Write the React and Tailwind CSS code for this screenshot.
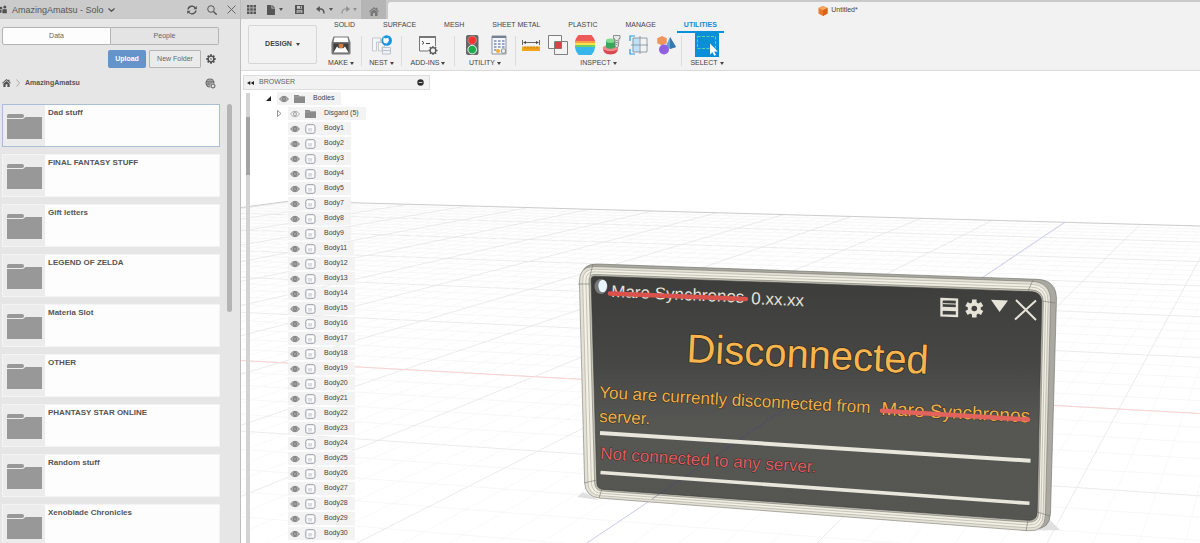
import React from "react";

const folders = [
  "Dad stuff",
  "FINAL FANTASY STUFF",
  "Gift letters",
  "LEGEND OF ZELDA",
  "Materia Slot",
  "OTHER",
  "PHANTASY STAR ONLINE",
  "Random stuff",
  "Xenoblade Chronicles",
];

const bodies = [
  1, 2, 3, 4, 5, 7, 8, 9, 11, 12, 13, 14, 15, 16, 17, 18, 19, 20, 21, 22, 23, 24, 25, 26, 27, 28, 29, 30,
];

const tabs = ["SOLID", "SURFACE", "MESH", "SHEET METAL", "PLASTIC", "MANAGE", "UTILITIES"];

function Caret({ className = "" }) {
  return (
    <svg viewBox="0 0 4 3" className={"h-[3px] w-1 shrink-0 fill-current " + className} aria-hidden="true">
      <path d="M0 0h4L2 3z" />
    </svg>
  );
}

function HomeIcon({ className }) {
  return (
    <svg viewBox="0 0 10 9" className={className} fill="currentColor" aria-hidden="true">
      <path d="M5 0 0 4.400l.7.8L5 1.500l4.300 3.700.7-.8-1.600-1.400V.8H7v1z" />
      <path d="M5 2.300 1.500 5.300V9H4V6h2v3h2.500V5.300z" />
    </svg>
  );
}

function GearIcon({ className, hole = 2.6 }) {
  return (
    <svg viewBox="0 0 12 12" className={className} aria-hidden="true">
      <g stroke="currentColor" strokeWidth="2.200">
        <path d="M6 .4v11.200M.4 6h11.200M2 2l8 8M10 2l-8 8" />
      </g>
      <circle cx="6" cy="6" r="4.200" fill="currentColor" />
      <circle cx="6" cy="6" r={hole} fill="#e6e6e6" />
      <circle cx="6" cy="6" r="1" fill="currentColor" />
    </svg>
  );
}

function FolderCard({ name, selected }) {
  return (
    <li>
      <a
        href="#folder"
        className={
          "flex h-[43px] border bg-[#fdfdfd] " + (selected ? "border-[#a9bdd6]" : "border-[#f4f4f4]")
        }
      >
        <span className="flex w-[42px] shrink-0 items-center justify-center bg-[#ececec]">
          <svg viewBox="0 0 35 26" className="h-[26px] w-[35px] fill-[#989898]" aria-hidden="true">
            <path d="M0 2.500Q0 1 1.500 1H15q2 0 2 2t-2 2H0z" />
            <path d="M0 6h16l2.500-2H35v22H0z" />
          </svg>
        </span>
        <span className="px-[3px] pt-[3px] text-[8px] leading-[10px] font-bold text-[#555]">{name}</span>
      </a>
    </li>
  );
}

function DataPanel() {
  return (
    <aside className="flex w-[241px] shrink-0 flex-col overflow-hidden border-r border-[#bdbdbd] bg-[#e6e6e6] text-[#555]">
      <header className="flex h-[19px] shrink-0 items-center bg-[#cbcbcb] pr-1">
        <svg viewBox="0 0 8 9" className="h-[9px] w-2 fill-[#505050]" aria-hidden="true">
          <circle cx="1" cy="3" r="1.300" />
          <circle cx="4.800" cy="2" r="1.500" />
          <path d="M0 4.800h1.500v3H0zM2.400 4.300h4.400v3.900H2.400z" />
        </svg>
        <button className="ml-1 flex items-center gap-1 text-[9px] leading-[12px]">
          AmazingAmatsu - Solo
          <svg viewBox="0 0 7 4" className="h-1 w-[7px]" fill="none" stroke="#555" strokeWidth="1.300" aria-hidden="true">
            <path d="M.5.500l3 2.800 3-2.800" />
          </svg>
        </button>
        <div className="ml-auto flex items-center gap-[10px]">
          <button aria-label="Refresh">
            <svg viewBox="0 0 10 10" className="block size-[10px]" fill="none" stroke="#505050" strokeWidth="1.300" aria-hidden="true">
              <path d="M1 4.500A4 4 0 0 1 8.300 3M9 5.500A4 4 0 0 1 1.700 7" />
              <path d="M9.800 1v3.200H6.500zM.2 9V5.800h3.300z" fill="#505050" stroke="none" />
            </svg>
          </button>
          <button aria-label="Search">
            <svg viewBox="0 0 10 10" className="block size-[10px]" fill="none" stroke="#555" aria-hidden="true">
              <circle cx="4" cy="4" r="3.300" />
              <path d="M6.400 6.400l3.300 3.300" strokeWidth="1.400" />
            </svg>
          </button>
          <button aria-label="Close panel">
            <svg viewBox="0 0 9 9" className="block size-[9px]" fill="none" stroke="#5a5a5a" strokeWidth=".9" aria-hidden="true">
              <path d="M.5.500l8 8M8.500.500l-8 8" />
            </svg>
          </button>
        </div>
      </header>

      <div className="mt-2 mr-[21px] ml-[2px] flex h-[18px] shrink-0 text-[7px] text-[#666]">
        <button className="flex-1 rounded-l-[2px] border border-[#b5b5b5] bg-[#fdfdfd]">Data</button>
        <button className="flex-1 rounded-r-[2px] border border-l-0 border-[#b5b5b5] bg-[#e4e4e4]">People</button>
      </div>

      <div className="mt-[5px] mr-6 flex h-[18px] shrink-0 items-center justify-end gap-[3px] text-[7px]">
        <button className="h-[18px] w-[38px] rounded-[2px] bg-[#6594cb] font-bold text-white">Upload</button>
        <button className="h-[18px] w-[52px] rounded-[1px] border border-[#b5b5b5] bg-[#ebebeb] text-[#666]">
          New Folder
        </button>
        <button aria-label="Settings" className="ml-[2px]">
          <GearIcon className="block size-[10px] text-[#505050]" />
        </button>
      </div>

      <nav aria-label="Breadcrumb" className="mt-[7px] mr-6 flex h-4 shrink-0 items-center pl-[2px] text-[7px] font-bold">
        <a href="#home" aria-label="Home">
          <HomeIcon className="h-2 w-[9px] text-[#505050]" />
        </a>
        <svg viewBox="0 0 4 8" className="mx-[5px] h-2 w-1" fill="none" stroke="#aaa" aria-hidden="true">
          <path d="M.5.500L3.500 4l-3 3.500" />
        </svg>
        <a href="#project">AmazingAmatsu</a>
        <button aria-label="Share" className="ml-auto">
          <svg viewBox="0 0 11 11" className="block size-[11px]" aria-hidden="true">
            <circle cx="5" cy="5" r="4.500" fill="#5a5a5a" />
            <path d="M.5 5h9M5 .5v9M1.500 2.700h7M1.500 7.300h7M5 .5C2 3 2 7 5 9.500M5 .5C8 3 8 7 5 9.500" fill="none" stroke="#ddd" strokeWidth=".5" />
            <circle cx="8" cy="8" r="2.800" fill="#e6e6e6" />
            <circle cx="8" cy="8" r="2" fill="none" stroke="#555" />
          </svg>
        </button>
      </nav>

      <div className="mt-[13px] flex min-h-0 flex-1 pr-2 pl-[2px]">
        <ul className="flex h-0 flex-1 flex-col gap-[7px]">
          {folders.map((name, i) => (
            <FolderCard key={name} name={name} selected={i === 0} />
          ))}
        </ul>
        <div className="ml-[7px] h-[208px] w-[5px] rounded-full bg-[#b4b4b4]" />
      </div>
    </aside>
  );
}

function TitleBar() {
  return (
    <header className="flex h-[19px] bg-[#c9c9c9] text-[#555]">
      <div className="flex items-center pl-[6px]">
        <button aria-label="Apps">
          <svg viewBox="0 0 9 9" className="block size-[9px] fill-current" aria-hidden="true">
            <path d="M0 0h2.500v2.500H0zM3.250 0h2.500v2.500h-2.500zM6.500 0H9v2.500H6.500zM0 3.250h2.500v2.500H0zM3.250 3.250h2.500v2.500h-2.500zM6.500 3.250H9v2.500H6.500zM0 6.500h2.500V9H0zM3.250 6.500h2.500V9h-2.500zM6.500 6.500H9V9H6.500z" />
          </svg>
        </button>
        <button aria-label="File" className="ml-[11px] flex items-center gap-1">
          <svg viewBox="0 0 8 10" className="h-[10px] w-2 fill-current" aria-hidden="true">
            <path d="M0 0h4.500v3.500H8V10H0zM5.300 0 8 2.700H5.300z" />
          </svg>
          <Caret />
        </button>
        <button aria-label="Save" className="ml-3">
          <svg viewBox="0 0 9 9" className="block size-[9px] fill-current" aria-hidden="true">
            <path fillRule="evenodd" d="M0 0h9v9H0zM2 1v2.700h5V1zM1.700 5.200V8h5.600V5.200z" />
            <path d="M2.500 6h4v.6h-4zM2.500 7h4v.6h-4zM5 1.300h1.200v2H5z" />
          </svg>
        </button>
        <button aria-label="Undo" className="ml-3 flex items-center gap-1">
          <svg viewBox="0 0 9 8" className="h-2 w-[9px]" fill="none" stroke="currentColor" strokeWidth="1.400" aria-hidden="true">
            <path d="M1.500 3H5q3 .3 3 4.500" />
            <path d="M3.800 0v6L0 3z" fill="currentColor" stroke="none" />
          </svg>
          <Caret />
        </button>
        <button aria-label="Redo" className="ml-2 flex items-center gap-[3px] text-[#8f8f8f]">
          <svg viewBox="0 0 9 8" className="h-2 w-[9px]" fill="none" stroke="currentColor" strokeWidth="1.200" aria-hidden="true">
            <path d="M7.500 3H4Q1 3.300 1 7.500" />
            <path d="M5.200 0v6L9 3z" fill="currentColor" stroke="none" />
          </svg>
          <Caret />
        </button>
        <button aria-label="Home" className="ml-1 flex h-[19px] w-[25px] items-center justify-center bg-[#b5b5b5] pt-1 text-[#777]">
          <HomeIcon className="h-[9px] w-[10px]" />
        </button>
      </div>
      <div className="mt-[2px] ml-[2px] flex flex-1 items-center justify-center gap-[3px] rounded-tl-[3px] bg-[#f2f2f2] pl-[88px] text-[7px] text-[#444]">
        <svg viewBox="0 0 10 10" className="size-[10px]" aria-hidden="true">
          <path d="M5 0l4.500 2v5.500L5 10 .5 7.500V2z" fill="#e8792b" />
          <path d="M5 0l4.500 2L5 4.200.5 2z" fill="#f6a765" />
          <path d="M5 4.200V10l4.500-2.500V2z" fill="#d96217" />
        </svg>
        <span>Untitled*</span>
      </div>
    </header>
  );
}

function Group({ label, width, children }) {
  return (
    <div className={"flex flex-col items-center " + width}>
      <div className="flex h-6 items-center gap-[7px]">{children}</div>
      <button className="flex h-3 items-center gap-[2px] whitespace-nowrap">
        {label}
        <Caret />
      </button>
    </div>
  );
}

function Divider() {
  return <div className="my-[3px] w-px bg-[#dcdcdc]" />;
}

function Tool({ label, children, className = "w-5" }) {
  return (
    <button aria-label={label} className={className}>
      <svg viewBox="0 0 20 20" className="mx-auto block size-5" fill="none" aria-hidden="true">
        {children}
      </svg>
    </button>
  );
}

function Ribbon() {
  return (
    <div className="flex h-[52px] shrink-0 border-b border-[#dadada] bg-[#f2f2f2] text-[7px] text-[#444]">
      <button className="mt-[6px] ml-[7px] flex h-[39px] w-[69px] shrink-0 items-center justify-center gap-1 rounded-[2px] border border-[#d6d6d6] font-bold">
        DESIGN
        <Caret />
      </button>
      <div className="ml-1 flex flex-col">
        <div className="flex h-[14px] gap-[14px] pl-[6px]">
          {tabs.map((t) => (
            <button
              key={t}
              className={
                "border-b-2 px-[7px] whitespace-nowrap " +
                (t === "UTILITIES" ? "border-[#0a8fd8] font-bold text-[#0a8fd8]" : "border-transparent")
              }
            >
              {t}
            </button>
          ))}
        </div>
        <div className="flex h-9">
          <Group label="MAKE" width="w-[40px]">
            <Tool label="Make">
              <path d="M2.500 1.500h15l2 6v10.500q0 1.500-1.500 1.500h-16Q.5 19.500.5 18V7.500z" fill="#777" />
              <path d="M3.500 2.500h13l1 4.500h-15z" fill="#fff" />
              <path d="M2.500 8.500h15V17.500h-15z" fill="#3f3f3f" />
              <path d="M2.500 17.500l3.500-6 2 2 2-3 2 3 2-2 3.500 6z" fill="#fff" />
              <path d="M7.700 9h4.600v2.500L10 14l-2.300-2.500z" fill="#d77c3c" />
            </Tool>
          </Group>
          <Divider />
          <Group label="NEST" width="w-[39px]">
            <Tool label="Nest">
              <path d="M.5 3h8v4H4.500v9h-4zM6.500 7.500h6V12H10v4H6.500z" fill="#f5f6f8" stroke="#c5c9ce" />
              <path d="M10.500 12.500h8v6.500h-8z" fill="#eef2f7" stroke="#b9c3cf" />
              <path d="M11 15.500h7.500" stroke="#b9c3cf" />
              <circle cx="14.700" cy="5.500" r="5.300" fill="#1795e0" />
              <path d="M11.500 2.500l2.200 1 2.500-1 .8 3-2 3-3-.5-.8-2z" fill="#fff" />
            </Tool>
          </Group>
          <Divider />
          <Group label="ADD-INS" width="w-[52px]">
            <Tool label="Scripts and add-ins">
              <path d="M1.500 2h16v14h-16z" fill="#f8f8f8" stroke="#777" />
              <path d="M1 2h17" stroke="#777" strokeWidth="2" />
              <path d="M4 6l2 1.800L4 9.500M8 8.500h4" stroke="#444" />
              <circle cx="15" cy="15.500" r="5" fill="#f2f2f2" />
              <path d="M15 11v9M10.500 15.500h9M11.800 12.300l6.400 6.400M18.200 12.300l-6.400 6.400" stroke="#555" strokeWidth="1.300" />
              <circle cx="15" cy="15.500" r="2.800" fill="#f2f2f2" stroke="#555" strokeWidth="1.200" />
            </Tool>
          </Group>
          <Divider />
          <Group label="UTILITY" width="w-[60px]">
            <Tool label="Compute">
              <rect x="4" y="0" width="12.500" height="20" rx="2" fill="#666" />
              <circle cx="10.200" cy="5.200" r="4.200" fill="#f4322e" stroke="#b9b9b9" strokeWidth=".6" />
              <circle cx="10.200" cy="14.600" r="4.300" fill="#1dab4c" stroke="#fff" strokeWidth=".9" />
            </Tool>
            <Tool label="Report">
              <path d="M3 1h14v18H3z" fill="#f4f6fa" stroke="#8b93a5" />
              <path d="M3 2h14" stroke="#777f92" strokeWidth="2" />
              <path d="M5 6h2.500M9 6h2.500M13 6h2.500M5 9h2.500M9 9h2.500M13 9h2.500M5 12h2.500M9 12h2.500M13 12h2.500M5 15h2.500" stroke="#7990b8" strokeWidth="1.300" />
              <circle cx="9" cy="16" r="2" fill="#eeb03c" />
              <circle cx="14.500" cy="16" r="2.300" fill="#eee" stroke="#777" strokeWidth=".8" />
            </Tool>
          </Group>
          <Divider />
          <Group label="INSPECT" width="w-[165px]">
            <Tool label="Measure">
              <path d="M1.500 5v5M18.500 5v5M3 7.500h14" stroke="#444" strokeWidth=".8" />
              <path d="M2 7.500l3-1.600v3.200zM18 7.500l-3-1.600v3.200z" fill="#444" />
              <path d="M1 11.500h18v4.500H1z" fill="#f2a51b" />
              <path d="M4 11.500v2M7 11.500v2M10 11.500v2M13 11.500v2M16 11.500v2" stroke="#9c6a0c" strokeWidth=".7" />
            </Tool>
            <Tool label="Interference">
              <path d="M.5.500h13v13H.5z" fill="#f8f8f8" stroke="#808080" />
              <path d="M6.500 6.500h13v13h-13z" fill="#f4f4f4" fillOpacity=".7" stroke="#808080" />
              <path d="M13.500 6v7.500H6" stroke="#808080" />
              <path d="M7 7h6.500v6.500H7z" fill="#d64545" />
            </Tool>
            <Tool label="Curvature">
              <path d="M3.500 0h13q3.500 4 3.500 7H0q0-3 3.500-7z" fill="#ee5957" />
              <path d="M0 6h20v2.500H0z" fill="#f7a04a" />
              <path d="M0 8h20v2H0z" fill="#f8e14a" />
              <path d="M0 10h20v2.500H0z" fill="#72cf63" />
              <path d="M0 12h20q0 4-3.500 8h-13Q0 16 0 12z" fill="#37b6ec" />
            </Tool>
            <Tool label="Section">
              <path d="M1 13q0 6.500 7.500 6.500T16 13z" fill="#d9484e" />
              <ellipse cx="8.500" cy="13" rx="7.800" ry="3.300" fill="#ef8b8d" />
              <path d="M4 6v6.500q4.500 2.500 9 0V6z" fill="#3aa65c" />
              <ellipse cx="8.500" cy="5.700" rx="4.500" ry="2.200" fill="#7fd98f" />
              <path d="M11.500.500h6.500v3h-1l-.7 8-1.600 1-1.500-1-.7-8h-1z" fill="#e9e9e9" stroke="#777" strokeWidth=".8" />
              <path d="M13 5l3 1M13 7l3 1M13.500 9l2 1" stroke="#777" strokeWidth=".8" />
            </Tool>
            <Tool label="Draft analysis">
              <path d="M3.500 3h7v14h-7z" fill="#bfe0f7" />
              <path d="M4 3h14v14H4zM11 1v18M2 10h17" stroke="#8795a3" strokeWidth=".9" />
              <path d="M6 1H1v5M1 14v5h5" stroke="#2a98de" strokeWidth="1.200" />
            </Tool>
            <Tool label="Components">
              <path d="M6 1l4.800 2.300v5L6 10.600 1.200 8.300v-5z" fill="#f0965c" />
              <path d="M14 2l6 10-6 2-4-3z" fill="#5aa2d8" />
              <path d="M14 2l6 10-6 2z" fill="#3978ad" />
              <circle cx="8" cy="14.500" r="5" fill="#8f61e0" />
            </Tool>
          </Group>
          <Divider />
          <Group label="SELECT" width="w-[50px]">
            <button aria-label="Select" className="h-6 w-6 bg-[#0a8fd8]">
              <svg viewBox="0 0 24 24" className="block size-6" fill="none" aria-hidden="true">
                <path d="M2.500 3.500h18v12h-18z" stroke="#5fd0a8" strokeDasharray="3 1.500" />
                <path d="M15 10.500v11l2.500-2.300 1.700 3.600 1.800-.9-1.700-3.500h3.500z" fill="#fff" />
              </svg>
            </button>
          </Group>
        </div>
      </div>
    </div>
  );
}

function Eye({ muted }) {
  return (
    <button aria-label="Toggle visibility" className="shrink-0">
      <svg viewBox="0 0 10 8" className="block h-2 w-[10px]" fill="none" stroke={muted ? "#aaa" : "#858585"} aria-hidden="true">
        <path d="M.5 4Q5-1.500 9.500 4 5 9.500.5 4z" fill={muted ? "#fff" : "#b5b5b5"} />
        <circle cx="5" cy="4" r="1.800" fill={muted ? "#ddd" : "#777"} />
        {muted ? null : <circle cx="5" cy="4" r=".7" fill="#ddd" stroke="none" />}
      </svg>
    </button>
  );
}

function TreeFolder() {
  return (
    <svg viewBox="0 0 11 8" className="mx-[5px] h-2 w-[11px] shrink-0 fill-[#8a8a8a]" aria-hidden="true">
      <path d="M0 0h4.500l1 1.200H11V8H0z" />
      <path d="M0 2h4.500l1-.7H11" stroke="#b5b5b5" strokeWidth=".5" fill="none" />
    </svg>
  );
}

function BrowserTree() {
  const row = "flex h-[13px] w-max items-center bg-[#f3f3f3] pr-[7px] pl-[2px]";
  return (
    <div className="relative flex h-full w-[190px] flex-col overflow-hidden pl-[2px] text-[7px] text-[#444]">
      <div className="mt-1 flex h-[15px] w-[187px] shrink-0 items-center border border-[#dedede] bg-[#f2f2f2] pr-[5px] pl-[3px] text-[#666]">
        <button aria-label="Collapse browser">
          <svg viewBox="0 0 7 4" className="block h-1 w-[7px] fill-[#222]" aria-hidden="true">
            <path d="M3.300 0v4L0 2zM7 0v4L3.700 2z" />
          </svg>
        </button>
        <h2 className="ml-[5px]">BROWSER</h2>
        <button aria-label="Hide browser" className="ml-auto">
          <svg viewBox="0 0 7 7" className="block size-[7px]" aria-hidden="true">
            <circle cx="3.500" cy="3.500" r="3.200" fill="#2d2d2d" />
            <path d="M1.700 3.500h3.600" stroke="#ddd" strokeWidth=".9" />
          </svg>
        </button>
      </div>
      <div className="mt-[2px] flex min-h-0 flex-1">
        <div className="mt-[1px] ml-[3px] w-1 shrink-0 bg-[#d3d3d3] pt-6">
          <div className="h-[58px] bg-[#a3a3a3]" />
        </div>
        <ul className="flex h-0 flex-col gap-[2px] pl-4">
          <li className="flex items-center">
            <button aria-label="Collapse Bodies">
              <svg viewBox="0 0 5 5" className="block size-[5px] fill-[#222]" aria-hidden="true">
                <path d="M5 0v5H0z" />
              </svg>
            </button>
            <div className={row + " ml-[6px]"}>
              <Eye />
              <TreeFolder />
              <span className="ml-[3px]">Bodies</span>
            </div>
          </li>
          <li className="flex items-center pl-[11px]">
            <button aria-label="Expand Disgard">
              <svg viewBox="0 0 5 7" className="block h-[7px] w-[5px]" fill="#fff" stroke="#777" strokeWidth=".8" aria-hidden="true">
                <path d="M.5.500v6l3.500-3z" />
              </svg>
            </button>
            <div className={row + " ml-[6px]"}>
              <Eye muted />
              <TreeFolder />
              <span className="ml-[3px]">Disgard (5)</span>
            </div>
          </li>
          {bodies.map((n) => (
            <li key={n} className="pl-[22px]">
              <div className={row}>
                <Eye />
                <svg viewBox="0 0 11 10" className="mx-[5px] h-[10px] w-[11px] shrink-0" aria-hidden="true">
                  <rect x=".8" y=".7" width="9.200" height="8.600" rx="1.800" fill="#fcfcfd" stroke="#8d929c" strokeWidth=".9" />
                  <path d="M3 4h4v3.500H3z" fill="#d9dbe0" />
                </svg>
                <span className="ml-[3px]">Body{n}</span>
              </div>
            </li>
          ))}
        </ul>
      </div>
    </div>
  );
}

/* Perspective grid: two families of lines meeting at their vanishing points. */
const VB = [1306, 61];
const VA = [-5546, 40];

const depthLines = Array.from({ length: 46 }, (_, k) => {
  const y = 60.7 + 1 / (0.00605 - (0.000536 * k) / 5);
  return { k, y };
}).filter((l) => l.y > 0 && l.y < 900);

const crossLines = Array.from({ length: 100 }, (_, i) => i - 60);

function roundedQuad(points, radii) {
  const toward = (a, b, r) => {
    const len = Math.hypot(b[0] - a[0], b[1] - a[1]);
    return [a[0] + ((b[0] - a[0]) * r) / len, a[1] + ((b[1] - a[1]) * r) / len];
  };
  return (
    points
      .map((p, i) => {
        const from = toward(p, points[(i + 3) % 4], radii[i]);
        const to = toward(p, points[(i + 1) % 4], radii[i]);
        return `${i ? "L" : "M"}${from} Q${p} ${to}`;
      })
      .join(" ") + "Z"
  );
}

const OUTER = [[579, 266], [1051, 282], [1045, 532], [585, 497]];
const INNER = [[591, 276], [1042, 292], [1037, 521], [597, 489]];

function frame(t) {
  const pts = OUTER.map((o, i) => [o[0] + (INNER[i][0] - o[0]) * t, o[1] + (INNER[i][1] - o[1]) * t]);
  const rOuter = [16, 20, 17, 15];
  const rInner = [4, 11, 9, 6];
  return roundedQuad(pts, rOuter.map((r, i) => r + (rInner[i] - r) * t));
}

function Viewport() {
  return (
    <svg
      viewBox="241 71 959 472"
      preserveAspectRatio="xMinYMin slice"
      className="absolute inset-0 h-full w-full bg-white"
      fontFamily="'Liberation Sans', Arial, sans-serif"
      role="img"
      aria-label="3D model canvas"
    >
      <defs>
        <clipPath id="ground">
          <path d="M290 201L1200 226L3000 276V2000H241V207.500z" />
        </clipPath>
        <linearGradient id="plate" x1="0" y1="0" x2="0" y2="1">
          <stop offset="0" stopColor="#3d3e3c" />
          <stop offset=".35" stopColor="#464745" />
          <stop offset=".6" stopColor="#565753" />
          <stop offset="1" stopColor="#555652" />
        </linearGradient>
      </defs>

      <g clipPath="url(#ground)" fill="none">
        {depthLines.map(({ k, y }) => (
          <path
            key={k}
            d={`M${VA} L1200 ${y}`}
            stroke={k % 5 === 0 ? "#e6e6e6" : "#f5f5f5"}
            strokeWidth=".8"
          />
        ))}
        {crossLines.map((k) => (
          <path
            key={k}
            d={`M${VB} L${587 + 46 * k} 543`}
            stroke={k % 5 === 0 ? "#e6e6e6" : "#f8f8f8"}
            strokeWidth=".8"
          />
        ))}
        <path d="M241 360.500L1200 413.500" stroke="#fad3d3" />
        <path d="M587 543L1065 222" stroke="#cfcff1" />
      </g>
      <path d="M241 207.500L290 201L1200 226" fill="none" stroke="#c8c8c8" strokeWidth=".9" />

      {/* Raised name plate */}
      <path d="M583 492l-6 5 22 3zM1020 531l40-1-12-12z" fill="#e0e0e0" />
      <path d={roundedQuad([[581, 263.5], [1057, 280], [1050, 530], [586, 496]], [16, 20, 17, 15])} fill="#a9a9a1" stroke="#6e6e67" strokeWidth=".6" />
      <path d={frame(0)} fill="#e3e0d5" stroke="#7a7972" strokeWidth=".6" />
      <path d={frame(0.28)} fill="#f3f0e5" stroke="#9b9a91" strokeWidth=".5" />
      <path d={frame(0.55)} fill="#f0ede1" stroke="#9b9a91" strokeWidth=".5" />
      <path d={frame(0.82)} fill="#c4c2b7" stroke="#77766f" strokeWidth=".6" />
      <path d={frame(1)} fill="url(#plate)" stroke="#3a3a38" strokeWidth=".6" />
      <path d="M578 284h12M593 264l-3 12M1033 280l-5 11M1055 303l-13-2M584 483l13-3M599 498l3-9M1026 531l2-11M1050 516l-13-4" stroke="#77766f" strokeWidth=".6" />
      <path d="M652 499L792 404" stroke="#45457f" strokeWidth=".8" opacity=".55" />

      <ellipse cx="601" cy="286.500" rx="6.500" ry="7.500" fill="#777a78" />
      <ellipse cx="602.700" cy="286" rx="4.300" ry="6.300" fill="#eaf6ff" />

      <g fill="#e6e3d8">
        <text fontSize="17" transform="translate(611 297) rotate(2.500)">Mare Synchronos</text>
        <text fontSize="17" transform="translate(751 304) rotate(2.500)">0.xx.xx</text>
      </g>
      <path d="M610 293.500L746 299" stroke="#d9534c" strokeWidth="4.500" strokeLinecap="round" />

      <g fill="none" stroke="#e6e3d8">
        <path d="M941.500 299l15.500.6v16.400l-15.500-.6z" strokeWidth="2.400" />
        <path d="M942 308.700l15 .6" strokeWidth="4" />
        <path d="M943 303.600l13.500.5" strokeWidth="1" />
        <path d="M1016 300l20 20M1036 300.500l-21 19" strokeWidth="2" />
      </g>
      <g transform="translate(974.300 308.500)">
        <path
          d="M0-9V9M-7.800-4.500L7.800 4.500M-7.800 4.500L7.800-4.500"
          stroke="#e6e3d8"
          strokeWidth="4.600"
        />
        <circle r="6.500" fill="#e6e3d8" />
        <circle r="2.800" fill="#40413f" />
      </g>
      <path d="M991 299.700l17 .8-8.500 11.500z" fill="#e6e3d8" />

      <g stroke="#2f2a20" paintOrder="stroke" strokeLinejoin="round">
        <text fontSize="40" fill="#f8b54e" strokeWidth="1.500" transform="translate(686 362) rotate(2.800)">
          Disconnected
        </text>
        <g fill="#efb04a" strokeWidth="1">
          <text fontSize="17" transform="translate(599 398) rotate(3.200)">You are currently disconnected from</text>
          <text fontSize="19" transform="translate(881 415) rotate(2.900)">Mare Synchronos</text>
          <text fontSize="17" transform="translate(599 422) rotate(2.600)">server.</text>
        </g>
        <text fontSize="17" fill="#de5e65" strokeWidth="1" transform="translate(600 459) rotate(3.600)">
          Not connected to any server.
        </text>
      </g>
      <path d="M882 410.700L1028 419.500" stroke="#e2635b" strokeWidth="4.500" strokeLinecap="round" />
      <path d="M600 433L1030.500 460.700" stroke="#e9e6db" strokeWidth="4" />
      <path d="M600.500 472.500L1029.500 503.300" stroke="#e9e6db" strokeWidth="3.600" />
    </svg>
  );
}

export default function App() {
  return (
    <div className="flex h-screen overflow-hidden bg-white font-['Liberation_Sans',Arial,sans-serif]">
      <DataPanel />
      <div className="flex min-w-0 flex-1 flex-col">
        <TitleBar />
        <Ribbon />
        <main className="relative min-h-0 flex-1 overflow-hidden">
          <Viewport />
          <BrowserTree />
        </main>
      </div>
    </div>
  );
}
